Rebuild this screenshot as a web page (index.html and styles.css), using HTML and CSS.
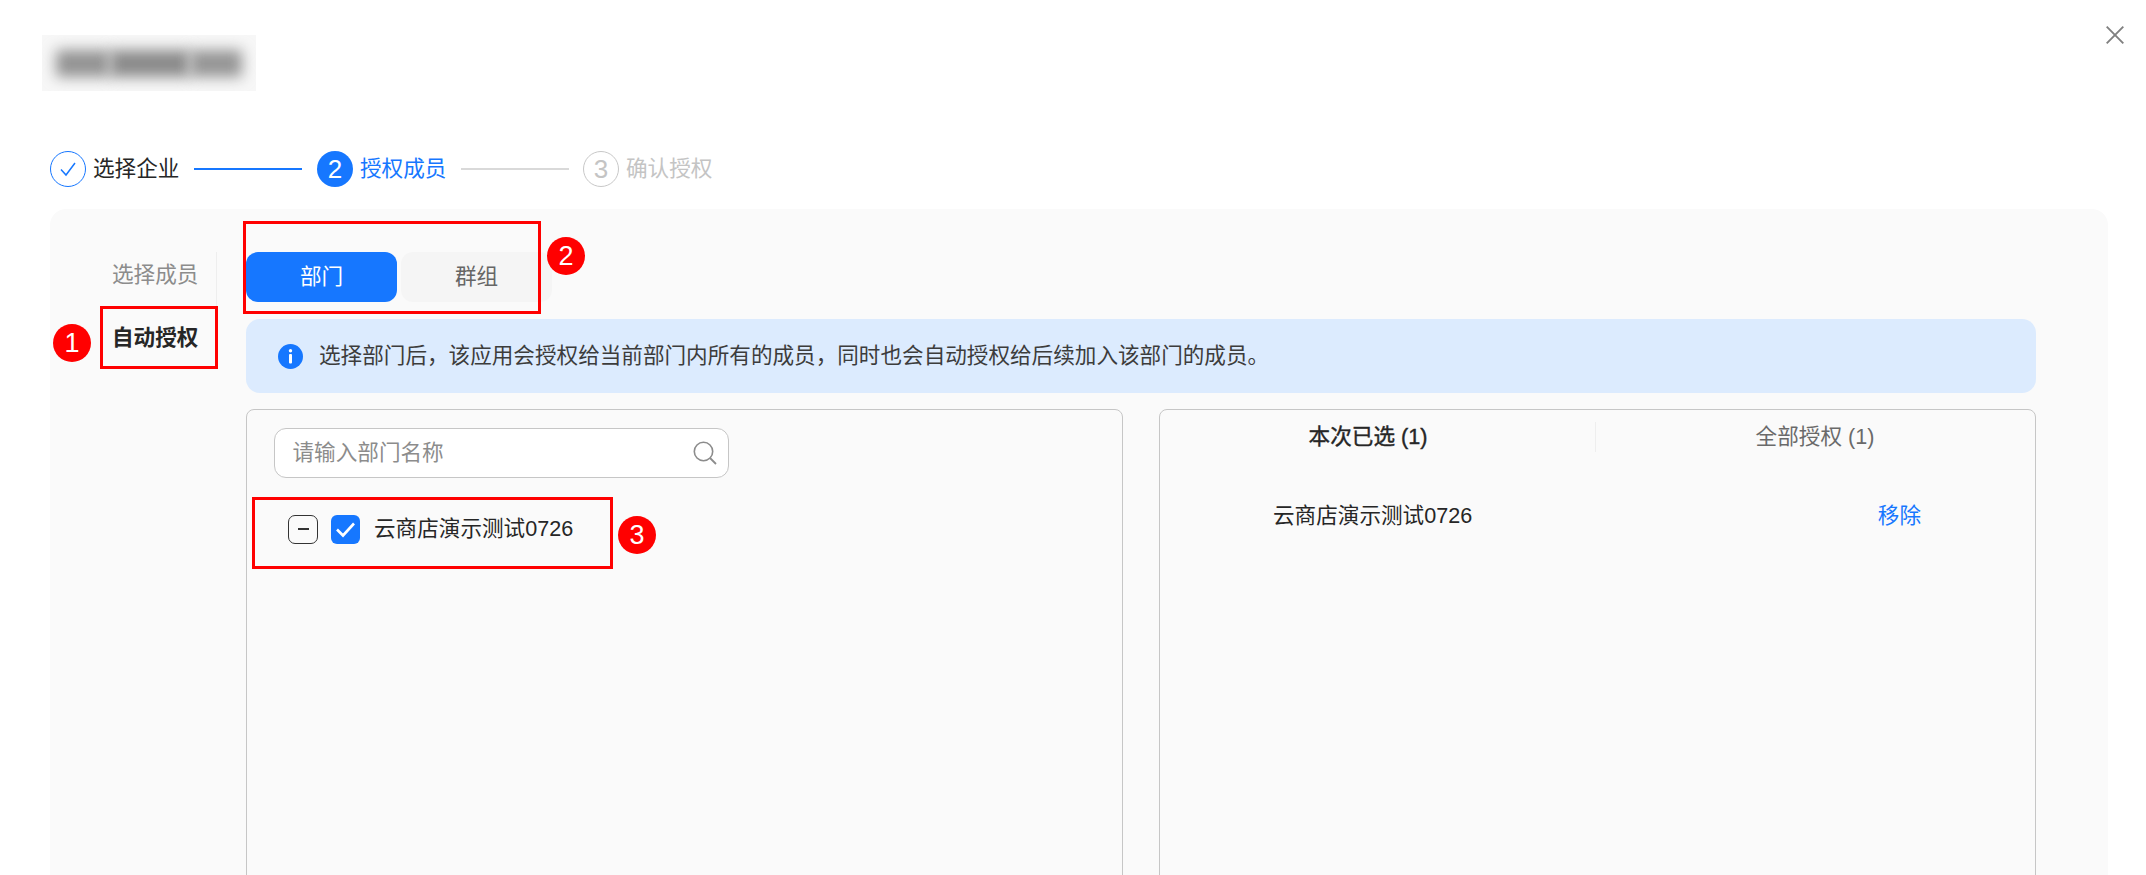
FILE: index.html
```html
<!DOCTYPE html>
<html lang="zh-CN">
<head>
<meta charset="utf-8">
<title>授权成员</title>
<link rel="stylesheet" href="styles.css">
</head>
<body>
<div class="stage">
  <svg class="close" width="18" height="18" viewBox="0 0 18 18"><path d="M.7.7l16.6 16.6M17.3.7L.7 17.3" fill="none" stroke="#808080" stroke-width="1.9"/></svg>
  <div class="title-blur">
    <div class="blur-a"></div>
    <div class="blur-b"></div>
    <div class="blur-c"></div>
  </div>

  <div class="steps">
    <span class="dot dot-done">
      <svg width="18" height="16" viewBox="0 0 18 16"><path d="M2 8.5l5 5.5L16 2" fill="none" stroke="#1677ff" stroke-width="1.5"/></svg>
    </span>
    <span class="step-label">选择企业</span>
    <span class="line line-on"></span>
    <span class="dot dot-now">2</span>
    <span class="step-label label-now">授权成员</span>
    <span class="line line-off"></span>
    <span class="dot dot-next">3</span>
    <span class="step-label label-next">确认授权</span>
  </div>

  <div class="panel">
    <nav class="side">
      <div class="side-item">选择成员</div>
      <div class="side-item side-active">自动授权</div>
    </nav>
    <div class="main">
      <div class="tabs">
        <div class="tab tab-on">部门</div>
        <div class="tab tab-off">群组</div>
      </div>
      <div class="info">
        <svg class="info-icon" width="25" height="25" viewBox="0 0 25 25"><circle cx="12.5" cy="12.5" r="12.5" fill="#1677ff"/><circle cx="12.5" cy="6.8" r="1.7" fill="#fff"/><rect x="11" y="10" width="3" height="9.5" rx="1" fill="#fff"/></svg>
        <span class="info-text">选择部门后，该应用会授权给当前部门内所有的成员，同时也会自动授权给后续加入该部门的成员。</span>
      </div>
      <div class="cols">
        <section class="col">
          <div class="search">
            <span class="placeholder">请输入部门名称</span>
            <svg width="24" height="24" viewBox="0 0 24 24"><circle cx="10.5" cy="10.5" r="9.2" fill="none" stroke="#8c8c8c" stroke-width="1.6"/><path d="M17 17l6 6" fill="none" stroke="#8c8c8c" stroke-width="1.8"/></svg>
          </div>
          <div class="tree-row">
            <span class="fold"><span class="fold-bar"></span></span>
            <span class="check">
              <svg width="21" height="17" viewBox="0 0 21 17"><path d="M2 8.5l6 6L19 2.5" fill="none" stroke="#fff" stroke-width="2.6"/></svg>
            </span>
            <span class="tree-text">云商店演示测试0726</span>
          </div>
        </section>
        <section class="col">
          <div class="col-tabs">
            <div class="col-tab col-tab-on">本次已选 (1)</div>
            <div class="col-tab col-tab-off">全部授权 (1)</div>
          </div>
          <div class="picked">
            <span class="picked-name">云商店演示测试0726</span>
            <span class="picked-remove">移除</span>
          </div>
        </section>
      </div>
    </div>
  </div>

  <div class="mark mark-box-1"></div>
  <div class="mark mark-box-2"></div>
  <div class="mark mark-box-3"></div>
  <div class="badge badge-1">1</div>
  <div class="badge badge-2">2</div>
  <div class="badge badge-3">3</div>
</div>
</body>
</html>
```
FILE: styles.css
```css
* { box-sizing: border-box; }
html, body { margin: 0; padding: 0; background: #fff; }
body {
  font-family: "Liberation Sans", "Noto Sans CJK SC", sans-serif;
  font-size: 21.6px;
  color: #262626;
  overflow: hidden;
}
.stage { position: relative; width: 2146px; height: 875px; overflow: hidden; padding-top: 35px; }

.close { position: absolute; left: 2106px; top: 26px; }

.title-blur {
  display: flex; padding: 15px 0 0 14px;
  width: 214px; height: 56px; margin-left: 42px;
  background: #f7f7f7; overflow: hidden;
}
.blur-a, .blur-b, .blur-c { height: 27px; filter: blur(7px); background: #8a8a8a; }
.blur-a { width: 54px; background: #939393; }
.blur-b { width: 80px; }
.blur-c { width: 52px; background: #959595; }

.steps { display: flex; align-items: center; height: 36px; margin: 60px 0 0 50px; }
.dot {
  width: 36px; height: 36px; border-radius: 50%;
  display: flex; align-items: center; justify-content: center;
  font-size: 26px; flex: none;
}
.dot-done { border: 1px solid #1677ff; }
.dot-now { background: #1677ff; color: #fff; }
.dot-next { border: 1px solid #c8c8c8; color: #c4c4c4; margin-left: -1px; }
.step-label { margin-left: 7px; line-height: 36px; width: 87px; white-space: nowrap; }
.label-now { color: #1677ff; }
.label-next { color: #c4c4c4; }
.line { width: 108px; height: 2px; margin: 0 15px 0 14px; }
.line-on { background: #1677ff; }
.line-off { background: #d9d9d9; }

.panel {
  display: flex; width: 2058px; height: 666px; margin: 22px 0 0 50px;
  background: #fafafa; border-radius: 16px 16px 0 0; overflow: hidden;
}
.side { width: 167px; height: 116px; margin-top: 43px; border-right: 1px solid #eeeeee; flex: none; }
.side-item { width: 166px; padding-left: 62px; line-height: 30px; height: 30px; margin-top: 8px; color: #8c8c8c; white-space: nowrap; }
.side-active { margin-top: 33px; color: #262626; font-weight: 700; }

.main { width: 1818px; padding: 43px 0 0 29px; flex: none; }
.tabs { display: flex; gap: 4px; height: 50px; }
.tab {
  width: 151px; height: 50px; border-radius: 12px; padding-bottom: 5px;
  display: flex; align-items: center; justify-content: center;
}
.tab-on { background: #1677ff; color: #fff; }
.tab-off { background: #f5f5f5; color: #666; }

.info {
  display: flex; align-items: center; gap: 16px;
  height: 74px; margin-top: 17px; padding-left: 32px;
  background: #dcebfe; border-radius: 14px; color: #3c3c3c;
  width: 1790px; white-space: nowrap;
}
.info-icon { flex: none; }
.info-text { margin-bottom: 5px; }

.cols { display: flex; gap: 36px; margin-top: 16px; width: 1790px; }
.col {
  width: 877px; height: 480px;
  border: 1.5px solid #c6c6c6; border-radius: 8px;
}
.search {
  display: flex; align-items: center; justify-content: space-between;
  width: 455px; height: 50px; margin: 18px 0 0 26.5px; padding: 0 11px 0 18px;
  background: #fff; border: 1.5px solid #c6c6c6; border-radius: 12px;
}
.placeholder { color: #8c8c8c; margin-bottom: 5px; }

.tree-row { display: flex; align-items: center; height: 30px; margin: 36px 0 0 41px; }
.fold {
  width: 30px; height: 29px; border: 1.5px solid #333; border-radius: 7px;
  display: flex; align-items: center; justify-content: center; flex: none;
}
.fold-bar { width: 11px; height: 2px; background: #333; }
.check {
  width: 29px; height: 29px; margin-left: 13px; background: #1677ff; border-radius: 6px;
  display: flex; align-items: center; justify-content: center; flex: none;
}
.tree-text { margin: 0 0 5px 14px; white-space: nowrap; }

.col-tabs { display: flex; height: 30px; margin-top: 11.5px; }
.col-tab { display: flex; align-items: center; justify-content: center; padding-bottom: 5px; }
.col-tab-on { width: 436px; border-right: 1px solid #eeeeee; padding-right: 19px; color: #262626; -webkit-text-stroke: 0.4px #262626; }
.col-tab-off { width: 438px; color: #6a6a6a; }

.picked { display: flex; justify-content: space-between; align-items: center; height: 30px; margin: 47px 0 0 0; padding: 0 114px 0 113px; }
.picked-remove { color: #1677ff; }

.mark { position: absolute; border: 3px solid #ff0000; }
.mark-box-1 { left: 100px; top: 306px; width: 118px; height: 63px; }
.mark-box-2 { left: 243px; top: 221px; width: 298px; height: 93px; }
.mark-box-3 { left: 252px; top: 497px; width: 361px; height: 72px; }
.badge {
  position: absolute; width: 38px; height: 38px; border-radius: 50%;
  background: #ff0000; color: #fff; font-size: 27px;
  display: flex; align-items: center; justify-content: center;
}
.badge-1 { left: 53px; top: 324px; }
.badge-2 { left: 547px; top: 237px; }
.badge-3 { left: 618px; top: 516px; }
```
